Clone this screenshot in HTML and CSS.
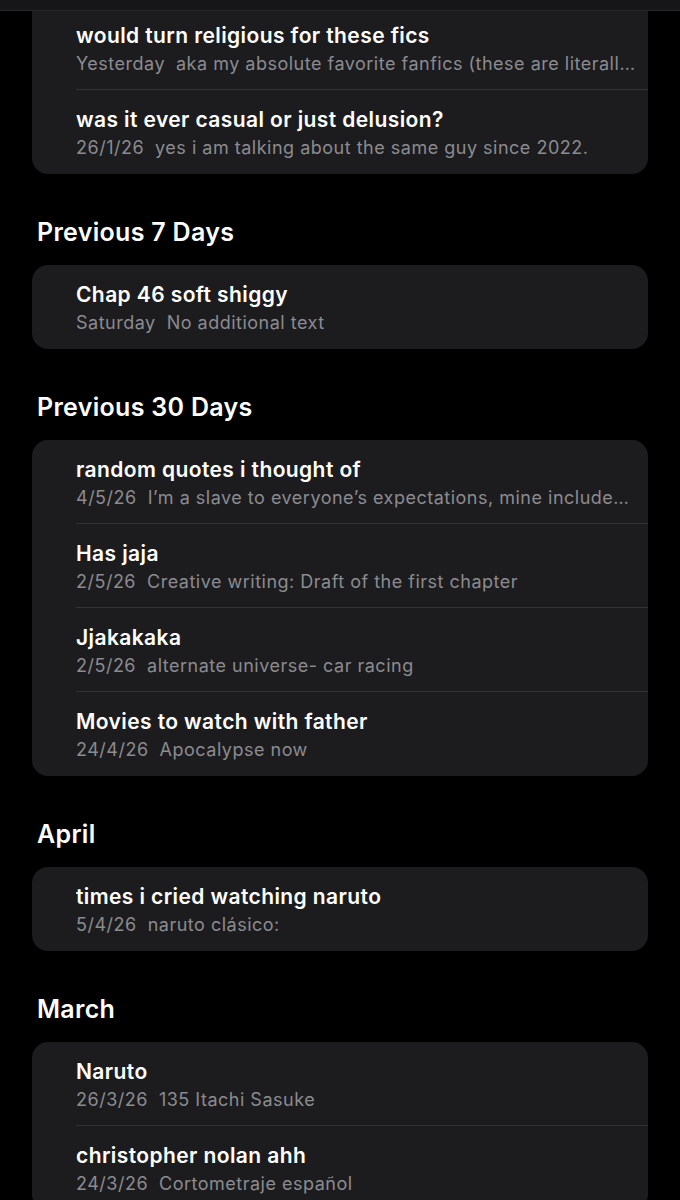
FILE: index.html
```html
<!DOCTYPE html>
<html lang="en">
<head>
<meta charset="utf-8">
<title>Notes</title>
<link rel="stylesheet" href="styles.css">
</head>
<body>
<div class="topbar"></div>
<main class="list">
  <section class="section first">
    <div class="card card-continued">
      <div class="row">
        <div class="title">would turn religious for these fics</div>
        <div class="sub"><span class="date">Yesterday</span>aka my absolute favorite fanfics (these are literally the best ones i have ever read)</div>
      </div>
      <div class="row">
        <div class="title">was it ever casual or just delusion?</div>
        <div class="sub"><span class="date">26/1/26</span>yes i am talking about the same guy since 2022.</div>
      </div>
    </div>
  </section>

  <section class="section">
    <h2 class="heading">Previous 7 Days</h2>
    <div class="card">
      <div class="row">
        <div class="title">Chap 46 soft shiggy</div>
        <div class="sub"><span class="date">Saturday</span>No additional text</div>
      </div>
    </div>
  </section>

  <section class="section">
    <h2 class="heading">Previous 30 Days</h2>
    <div class="card">
      <div class="row">
        <div class="title">random quotes i thought of</div>
        <div class="sub"><span class="date">4/5/26</span>I’m a slave to everyone’s expectations, mine included and everyone else’s</div>
      </div>
      <div class="row">
        <div class="title">Has jaja</div>
        <div class="sub"><span class="date">2/5/26</span>Creative writing: Draft of the first chapter</div>
      </div>
      <div class="row">
        <div class="title">Jjakakaka</div>
        <div class="sub"><span class="date">2/5/26</span>alternate universe- car racing</div>
      </div>
      <div class="row">
        <div class="title">Movies to watch with father</div>
        <div class="sub"><span class="date">24/4/26</span>Apocalypse now</div>
      </div>
    </div>
  </section>

  <section class="section">
    <h2 class="heading">April</h2>
    <div class="card">
      <div class="row">
        <div class="title">times i cried watching naruto</div>
        <div class="sub"><span class="date">5/4/26</span>naruto clásico:</div>
      </div>
    </div>
  </section>

  <section class="section">
    <h2 class="heading">March</h2>
    <div class="card">
      <div class="row">
        <div class="title">Naruto</div>
        <div class="sub"><span class="date">26/3/26</span>135 Itachi Sasuke</div>
      </div>
      <div class="row">
        <div class="title">christopher nolan ahh</div>
        <div class="sub"><span class="date">24/3/26</span>Cortometraje español</div>
      </div>
    </div>
  </section>
</main>
</body>
</html>
```

FILE: styles.css
```css
* {
  box-sizing: border-box;
}

html, body {
  margin: 0;
  padding: 0;
  background: #000;
}

body {
  font-family: Inter, "Noto Sans", "Liberation Sans", sans-serif;
  color: #fff;
  height: 1200px;
  overflow: hidden;
  position: relative;
}

.topbar {
  position: fixed;
  top: 0;
  left: 0;
  right: 0;
  height: 11px;
  background: #161618;
  border-bottom: 1px solid #29292b;
  z-index: 5;
}

.list {
  padding: 6px 32px 0 32px;
}

.section {
  display: flex;
  flex-direction: column;
}

.heading {
  margin: 42px 0 17px 5px;
  font-size: 25px;
  line-height: 32px;
  font-weight: 600;
  letter-spacing: 0.3px;
  color: #fff;
}

.card {
  background: #1c1c1e;
  border-radius: 16px;
  overflow: hidden;
}

.card-continued {
  border-top-left-radius: 0;
  border-top-right-radius: 0;
}

.row {
  margin-left: 44px;
  padding: 18px 10px 15px 0;
  border-bottom: 1px solid #323234;
  height: 84px;
}

.row:last-child {
  border-bottom: none;
}

.title {
  font-size: 21px;
  line-height: 24px;
  font-weight: 600;
  letter-spacing: 0.4px;
  white-space: nowrap;
  overflow: hidden;
  text-overflow: ellipsis;
}

.sub {
  margin-top: 5px;
  font-size: 18px;
  line-height: 22px;
  letter-spacing: 0.5px;
  color: #8b8b90;
  white-space: nowrap;
  overflow: hidden;
  text-overflow: ellipsis;
}

.date {
  margin-right: 11px;
}
```
